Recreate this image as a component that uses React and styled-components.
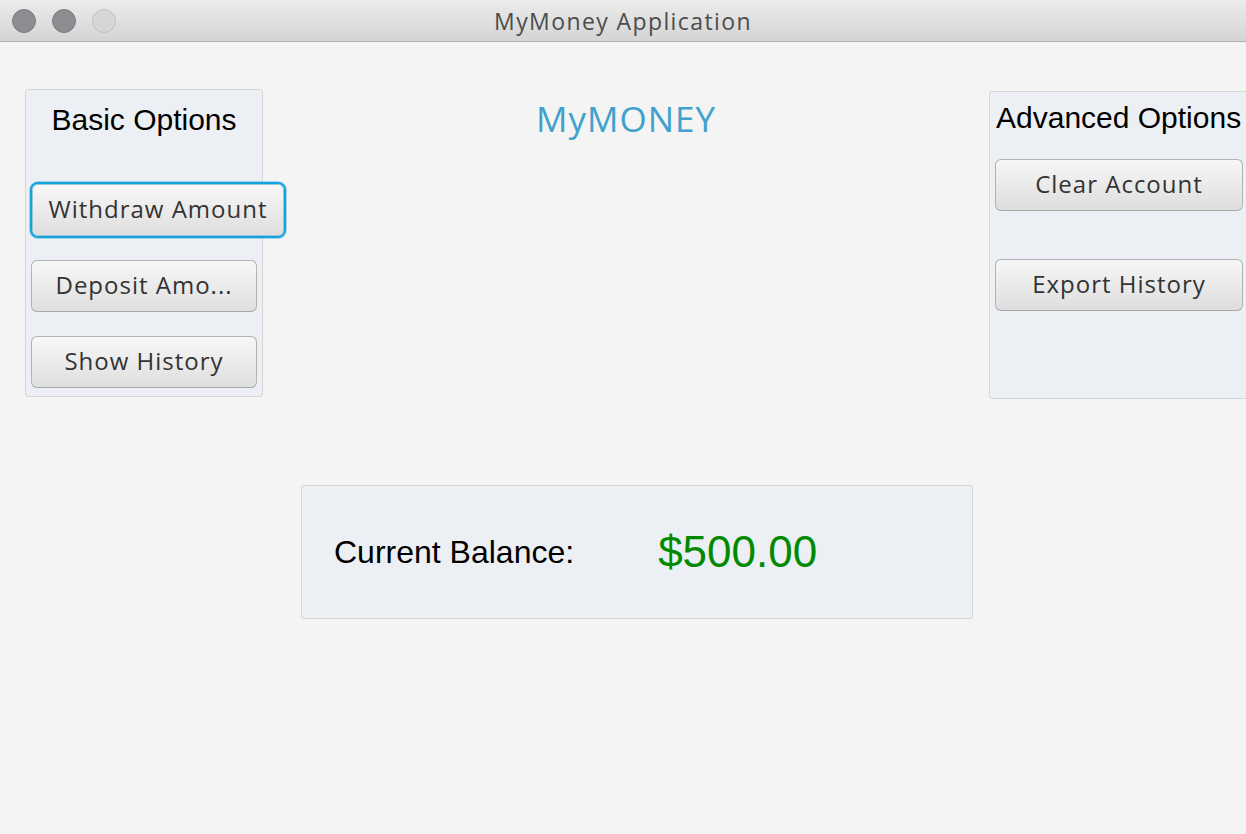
import React from 'react';
import styled, { createGlobalStyle, css } from 'styled-components';

const GlobalStyle = createGlobalStyle`
  html, body {
    margin: 0;
    padding: 0;
    overflow: hidden;
    background: #f4f4f4;
  }
  * { box-sizing: border-box; }
`;

const Window = styled.div`
  width: 1246px;
  height: 834px;
  display: flex;
  flex-direction: column;
  background: #f4f4f4;
  font-family: "Liberation Sans", Arial, sans-serif;
`;

const TitleBar = styled.div`
  height: 42px;
  flex-shrink: 0;
  display: grid;
  grid-template-columns: 200px 1fr 200px;
  align-items: center;
  padding-left: 12px;
  background: linear-gradient(#ececec, #d4d4d4);
  border-bottom: 1px solid #b0b0b0;
`;

const Lights = styled.div`
  display: flex;
  gap: 16px;
`;

const Light = styled.span`
  width: 24px;
  height: 24px;
  border-radius: 50%;
  background: ${p => (p.$off ? '#d6d6d6' : '#8d8c90')};
  border: 1px solid ${p => (p.$off ? '#c2c2c2' : '#7b7a7e')};
`;

const WindowTitle = styled.div`
  text-align: center;
  font-family: "Open Sans", sans-serif;
  font-size: 23px;
  letter-spacing: 1.4px;
  color: #4d4d4d;
  margin-left: -12px;
`;

const Content = styled.div`
  flex: 1;
  padding: 47px 0 0 25px;
`;

const TopRow = styled.div`
  display: grid;
  grid-template-columns: 238px 726px 260px;
  align-items: start;
`;

const Panel = styled.div`
  height: 308px;
  background: #eceff3;
  border: 1px solid #d6d6d6;
  border-radius: 3px;
  display: flex;
  flex-direction: column;
  align-items: flex-start;
  padding: ${p => (p.$advanced ? '8px' : '12px')} 5px 0 5px;
  margin-top: ${p => (p.$advanced ? 2 : 0)}px;
`;

const PanelHeading = styled.div`
  font-size: 30px;
  line-height: 36px;
  color: #000;
  white-space: nowrap;
  ${p => p.$center
    ? css`
        align-self: stretch;
        text-align: center;
      `
    : css`
        padding-left: 1px;
      `}
`;

const Button = styled.button`
  width: ${p => p.$width || 226}px;
  height: 52px;
  margin-top: ${p => p.$gap || 0}px;
  flex-shrink: 0;
  border: 1px solid #b2b2b2;
  border-bottom-color: #a9a9a9;
  border-radius: 6px;
  background: linear-gradient(#f7f7f7, #dedede);
  color: #333;
  font-family: "Open Sans", sans-serif;
  font-size: 24px;
  letter-spacing: 1px;
  padding: 0 0 3px;
  white-space: nowrap;
  cursor: pointer;
  ${p => p.$focused && css`
    margin-left: 1px;
    border-color: #9cc4dc;
    box-shadow: 0 0 0 2px #10a3dc, 0 0 0 3px rgba(16, 163, 220, 0.35);
  `}
`;

const Brand = styled.h1`
  margin: 10px 0 0;
  text-align: center;
  font-family: "Open Sans", sans-serif;
  font-weight: 400;
  font-size: 35px;
  letter-spacing: 1px;
  line-height: 40px;
  color: #41a1cd;
`;

const BalanceBox = styled.div`
  width: 672px;
  height: 134px;
  margin: 86px 0 0 276px;
  background: #eceff3;
  border: 1px solid #d6d6d6;
  border-radius: 3px;
  display: flex;
  align-items: center;
  gap: 84px;
  padding-left: 32px;
`;

const BalanceLabel = styled.span`
  font-size: 32px;
  color: #000;
`;

const BalanceValue = styled.span`
  font-size: 44px;
  color: #008a00;
`;

export default function App() {
  return (
    <Window>
      <GlobalStyle />
      <TitleBar>
        <Lights>
          <Light />
          <Light />
          <Light $off />
        </Lights>
        <WindowTitle>MyMoney Application</WindowTitle>
      </TitleBar>
      <Content>
        <TopRow>
          <Panel>
            <PanelHeading $center>Basic Options</PanelHeading>
            <Button $width={252} $gap={46} $focused>Withdraw Amount</Button>
            <Button $gap={24}>Deposit Amo...</Button>
            <Button $gap={24}>Show History</Button>
          </Panel>
          <Brand>MyMONEY</Brand>
          <Panel $advanced>
            <PanelHeading>Advanced Options</PanelHeading>
            <Button $width={248} $gap={23}>Clear Account</Button>
            <Button $width={248} $gap={48}>Export History</Button>
          </Panel>
        </TopRow>
        <BalanceBox>
          <BalanceLabel>Current Balance:</BalanceLabel>
          <BalanceValue>$500.00</BalanceValue>
        </BalanceBox>
      </Content>
    </Window>
  );
}
